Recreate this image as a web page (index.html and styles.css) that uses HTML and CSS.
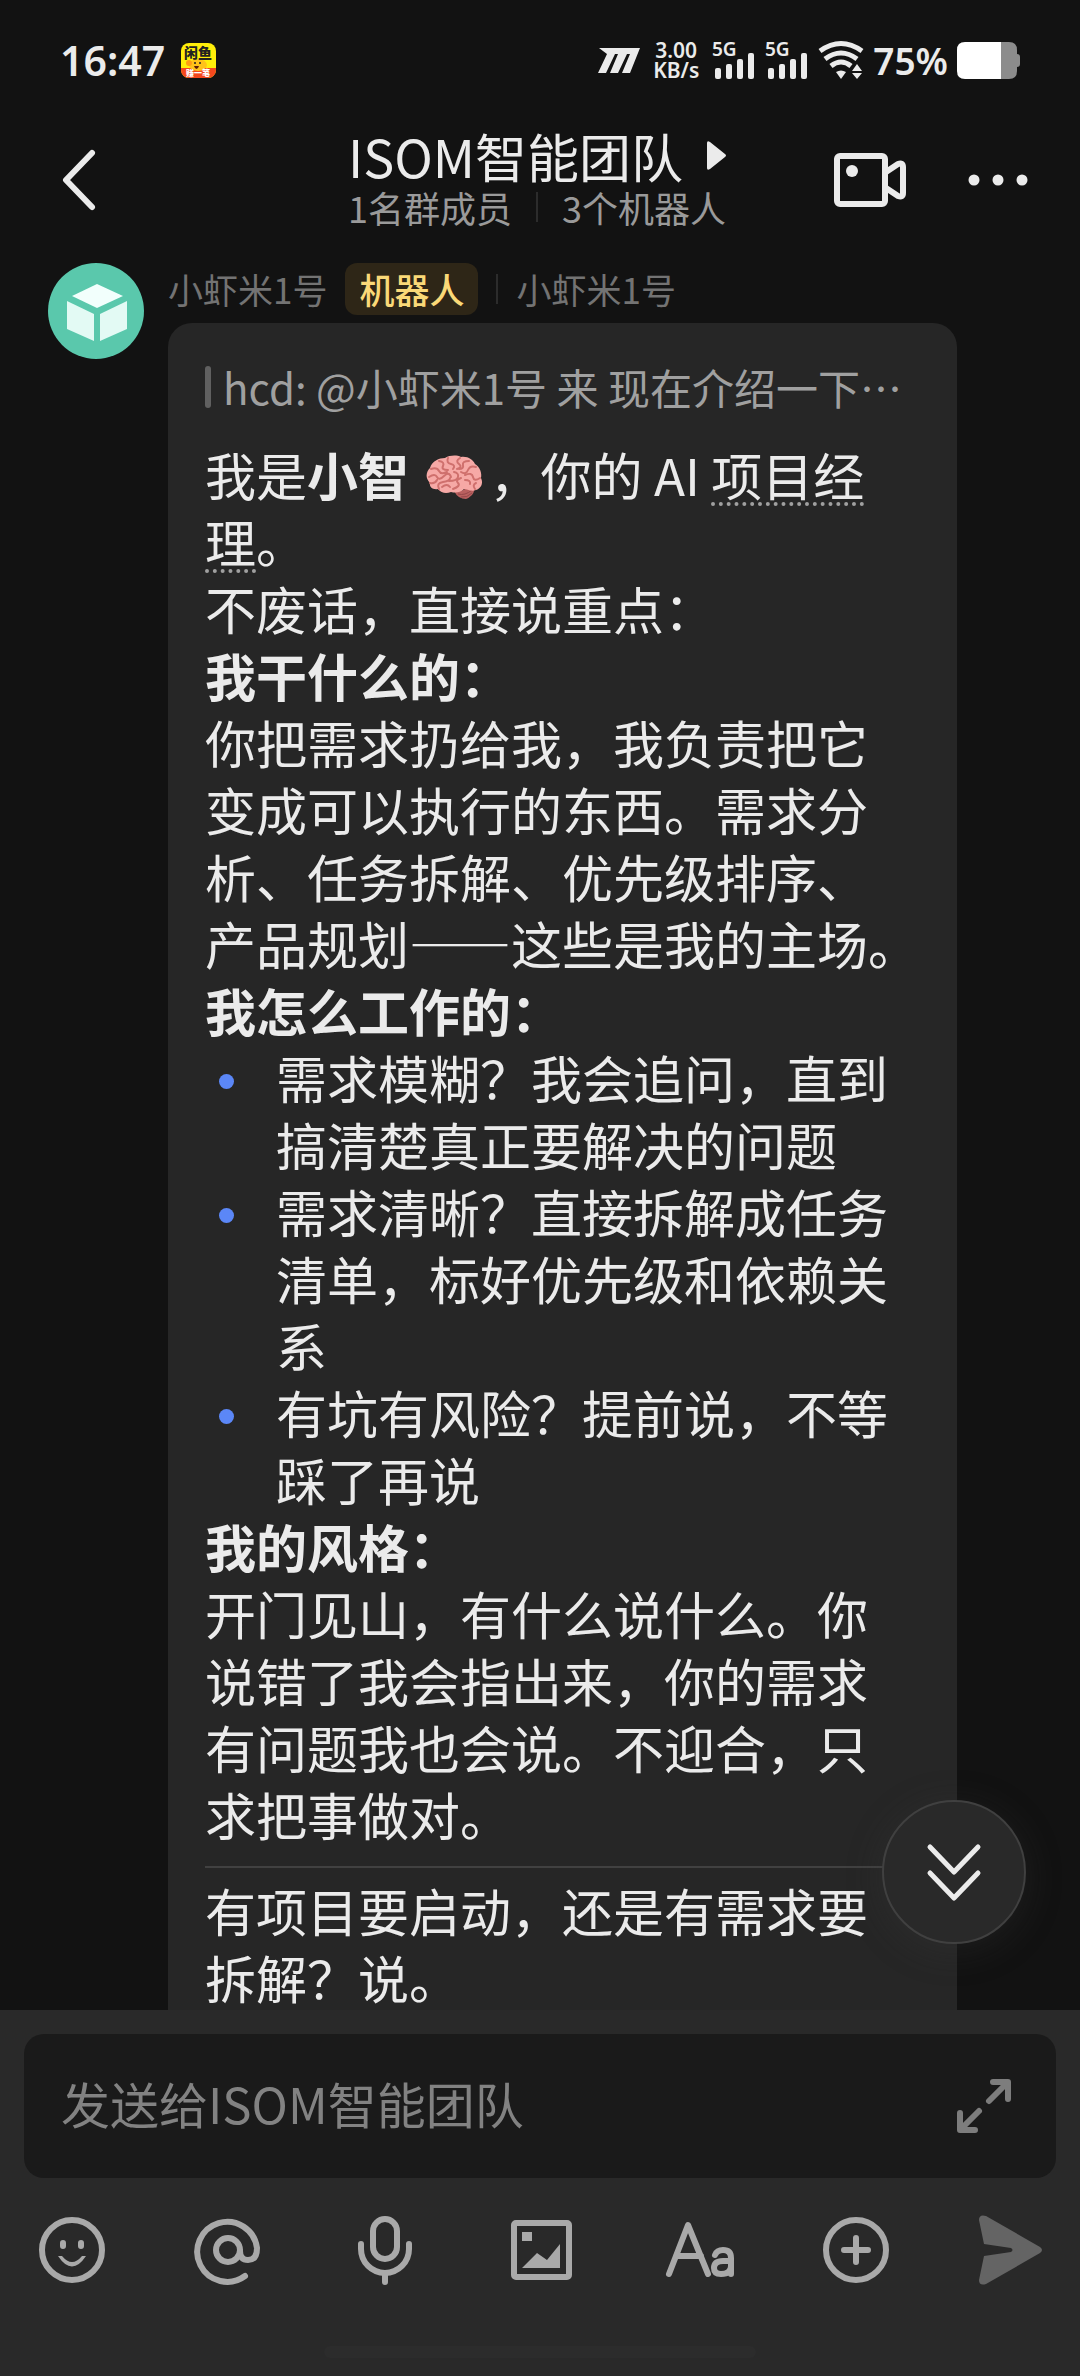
FILE: index.html
```html
<!DOCTYPE html>
<html lang="zh-CN">
<head>
    <meta charset="UTF-8">
    <meta name="viewport" content="width=device-width, initial-scale=1.0">
    <title>ISOM智能团队</title>
    <link rel="stylesheet" href="styles.css">
</head>
<body>
    <div class="screen">

        <!-- 状态栏 -->
        <div class="status-bar">
            <div class="status-left">
                <span class="time">16:47</span>
                <svg class="app-icon" width="35" height="35" viewBox="0 0 35 35">
                    <defs>
                        <clipPath id="appClip"><rect width="35" height="35" rx="8"/></clipPath>
                    </defs>
                    <g clip-path="url(#appClip)">
                        <rect width="35" height="35" fill="#ffee0a"/>
                        <rect y="25" width="35" height="10" fill="#f4481e"/>
                        <ellipse cx="17" cy="22" rx="9" ry="6" fill="#ffc21a"/>
                        <circle cx="8" cy="20" r="3" fill="#ff9d14"/>
                        <circle cx="14" cy="20" r="1" fill="#222"/>
                        <circle cx="19" cy="20" r="1" fill="#222"/>
                        <path d="M13 23h5q-1 3-2.500 3t-2.500-3z" fill="#5a1a08"/>
                        <text class="app-name" x="17" y="15" text-anchor="middle">闲鱼</text>
                        <text class="app-tag" x="17" y="33" text-anchor="middle">赚一笔</text>
                    </g>
                </svg>
            </div>
            <div class="status-right">
                <svg class="logo-m" width="42" height="25" viewBox="0 0 42 25" fill="#ebebeb">
                    <path d="M1 0H42L32 25H24L32 6H29L20 25H12L20 6H17L8 25H0L9 6Z"/>
                </svg>
                <div class="speed">
                    <span>3.00</span>
                    <span>KB/s</span>
                </div>
                <svg class="signal" width="44" height="38" viewBox="0 0 44 38" fill="#ebebeb">
                    <text class="net" x="0" y="15">5G</text>
                    <rect x="3" y="27" width="6" height="11" rx="2"/>
                    <rect x="14" y="23" width="6" height="15" rx="2"/>
                    <rect x="25" y="18" width="6" height="20" rx="2"/>
                    <rect x="36" y="12" width="6" height="26" rx="2"/>
                </svg>
                <svg class="signal" width="44" height="38" viewBox="0 0 44 38" fill="#ebebeb">
                    <text class="net" x="0" y="15">5G</text>
                    <rect x="3" y="27" width="6" height="11" rx="2"/>
                    <rect x="14" y="23" width="6" height="15" rx="2"/>
                    <rect x="25" y="18" width="6" height="20" rx="2"/>
                    <rect x="36" y="12" width="6" height="26" rx="2"/>
                </svg>
                <svg class="wifi" width="46" height="38" viewBox="0 0 46 38" fill="none" stroke="#ebebeb" stroke-width="5">
                    <path d="M2 10Q23-5 44 10"/>
                    <path d="M7 18Q23 6 39 18"/>
                    <path d="M13 25Q23 17 33 25"/>
                    <path d="M18 31q5-3 10 0l-5 7z" fill="#ebebeb" stroke="none"/>
                    <path d="M39 23l5 7H34zM39 38l5-6H34z" fill="#ebebeb" stroke="none"/>
                </svg>
                <span class="percent">75%</span>
                <svg class="battery" width="63" height="37" viewBox="0 0 63 37">
                    <path d="M44 0h8q8 0 8 8v4q3 0 3 3v7q0 3-3 3v4q0 8-8 8h-8z" fill="#8c8c8c"/>
                    <path d="M8 0h36v37H8q-8 0-8-8V8q0-8 8-8z" fill="#fff"/>
                </svg>
            </div>
        </div>

        <!-- 标题栏 -->
        <header class="header">
            <button type="button" class="icon-btn" aria-label="返回">
                <svg width="36" height="66" viewBox="0 0 36 66" fill="none" stroke="#ebebeb" stroke-width="6" stroke-linecap="round" stroke-linejoin="round">
                    <path d="M32 6L6 33l26 27"/>
                </svg>
            </button>
            <div class="header-center">
                <h1 class="title">ISOM智能团队
                    <svg class="arrow" width="19" height="29" viewBox="0 0 19 29" fill="#ebebeb">
                        <path d="M0 2q0-3 3-1l15 12q2 1.500 0 3L3 28q-3 2-3-1z"/>
                    </svg>
                </h1>
                <p class="subtitle"><span>1名群成员</span><i class="split"></i><span>3个机器人</span></p>
            </div>
            <div class="header-actions">
                <button type="button" class="icon-btn" aria-label="视频会议">
                    <svg width="72" height="54" viewBox="0 0 72 54" fill="none" stroke="#ebebeb" stroke-width="6" stroke-linejoin="round">
                        <rect x="3" y="3" width="48" height="48" rx="3"/>
                        <path d="M52 19l12-8q5-2 5 3v26q0 5-5 3l-12-8"/>
                        <circle cx="18" cy="18" r="6" fill="#ebebeb" stroke="none"/>
                    </svg>
                </button>
                <button type="button" class="icon-btn" aria-label="更多">
                    <svg width="60" height="12" viewBox="0 0 60 12" fill="#ebebeb">
                        <circle cx="6" cy="6" r="5.500"/>
                        <circle cx="30" cy="6" r="5.500"/>
                        <circle cx="54" cy="6" r="5.500"/>
                    </svg>
                </button>
            </div>
        </header>

        <!-- 聊天区 -->
        <main class="chat">
            <div class="message-list">
                <article class="message">
                    <svg class="avatar" width="96" height="96" viewBox="0 0 96 96">
                        <circle cx="48" cy="48" r="48" fill="#5ac8ac"/>
                        <g fill="#f2fffc">
                            <path d="M24 33L49 21l26 12-26 12z"/>
                            <path d="M19 38l27 13v27L19 66z" opacity="0.9"/>
                            <path d="M79 38L52 51v27l27-12z" opacity="0.9"/>
                        </g>
                    </svg>
                    <div class="message-body">
                        <div class="sender">
                            <span>小虾米1号</span>
                            <span class="badge">机器人</span>
                            <i class="split"></i>
                            <span>小虾米1号</span>
                        </div>
                        <div class="bubble">
                            <blockquote class="quote">hcd: @小虾米1号 来 现在介绍一下…</blockquote>
                            <p>我是<b>小智</b> <svg class="emoji" width="57" height="46" viewBox="0 0 57 46">
                                    <path d="M28 36q8 1 12-3l8-2q1 6-2 9t-6 4q-8 0-12-8z" fill="#b9605f"/>
                                    <path d="M32 39q7 2 14-4M35 42q6 1 11-4" fill="none" stroke="#96484a" stroke-width="1"/>
                                    <path d="M4 28C-1 23 0 17 4 13 6 6 13 3 19 3 24 0 31 0 35 2 42 1 47 5 49 9 54 12 56 18 55 23 58 29 54 34 50 35 45 37 41 34 38 34 34 38 29 38 25 37 20 39 15 38 12 34 7 35 3 32 4 28z" fill="#f6a9a6"/>
                                    <g fill="none" stroke="#cf706d" stroke-width="2" stroke-linecap="round">
                                        <path d="M13 6q6 1 4 5t5 4M22 3q-2 5 3 6t2 5M34 3q-5 3-1 6t-2 5M43 6q-7 0-6 4t-4 4M50 12q-6-2-8 3t-7 2"/>
                                        <path d="M5 14q6-2 8 2t8 1M3 22q6-4 8 0t7-1 7 1M4 28q5 1 7-3M13 34q-3-6 4-7t7-4M28 17q5 1 4 5t-9 4M39 20q7-3 8 2t7 1M35 23q-6 2-3 5t-5 6M39 25q6 0 5 4M50 28q-4 2-1 6M16 32q5-4 8 0"/>
                                    </g>
                                </svg>，你的 AI <span class="term">项目经理</span>。</p>
                            <p>不废话，直接说重点：</p>
                            <p><b>我干什么的：</b></p>
                            <p>你把需求扔给我，我负责把它变成可以执行的东西。需求分析、任务拆解、优先级排序、产品规划——这些是我的主场<span class="hang">。</span></p>
                            <p><b>我怎么工作的：</b></p>
                            <ul class="points">
                                <li>需求模糊？我会追问，直到搞清楚真正要解决的问题</li>
                                <li>需求清晰？直接拆解成任务清单，标好优先级和依赖关系</li>
                                <li>有坑有风险？提前说，不等踩了再说</li>
                            </ul>
                            <p><b>我的风格：</b></p>
                            <p>开门见山，有什么说什么。你说错了我会指出来，你的需求有问题我也会说。不迎合，只求把事做对。</p>
                            <hr class="line">
                            <p>有项目要启动，还是有需求要拆解？说。</p>
                        </div>
                    </div>
                </article>
            </div>
            <button type="button" class="scroll-btn" aria-label="回到底部">
                <svg width="54" height="60" viewBox="0 0 54 60" fill="none" stroke="#ebebeb" stroke-width="5" stroke-linecap="round" stroke-linejoin="round">
                    <path d="M3 5l24 25L51 5M3 31l24 25 24-25"/>
                </svg>
            </button>
        </main>

        <!-- 输入区 -->
        <footer class="composer">
            <div class="input-box">
                <input type="text" class="input" placeholder="发送给ISOM智能团队" aria-label="消息">
                <button type="button" class="icon-btn" aria-label="展开">
                    <svg width="54" height="54" viewBox="0 0 54 54" fill="none" stroke="#7d7d7d" stroke-width="6" stroke-linecap="round" stroke-linejoin="round">
                        <path d="M36 3h15v17M32 22L50 4M18 51H3V34M22 32L4 50"/>
                    </svg>
                </button>
            </div>
            <div class="toolbar">
                <button type="button" class="icon-btn" aria-label="表情">
                    <svg width="66" height="68" viewBox="0 0 66 68" fill="none" stroke="#a9a9a9" stroke-width="6" stroke-linecap="round">
                        <circle cx="33" cy="34" r="30"/>
                        <path d="M24 27v3M42 27v3"/>
                        <path d="M19 40h4q10 12 20 0h4q-14 21-28 0z" fill="#a9a9a9" stroke="none"/>
                    </svg>
                </button>
                <button type="button" class="icon-btn" aria-label="提及">
                    <svg width="66" height="68" viewBox="0 0 66 68" fill="none" stroke="#a9a9a9" stroke-width="6" stroke-linecap="round">
                        <circle cx="33" cy="34" r="12"/>
                        <path d="M45 35q0 9 8 9 9 0 9-12A30 30 0 1 0 50 60"/>
                    </svg>
                </button>
                <button type="button" class="icon-btn" aria-label="语音">
                    <svg width="66" height="68" viewBox="0 0 66 68" fill="none" stroke="#a9a9a9" stroke-width="6" stroke-linecap="round">
                        <rect x="21" y="3" width="24" height="40" rx="12"/>
                        <path d="M9 28v5a24 24 0 0 0 48 0v-5M33 58v8"/>
                    </svg>
                </button>
                <button type="button" class="icon-btn" aria-label="图片">
                    <svg width="66" height="68" viewBox="0 0 66 68" fill="none" stroke="#a9a9a9" stroke-width="6" stroke-linejoin="round">
                        <rect x="6" y="7" width="55" height="54" rx="2"/>
                        <path d="M14 16h10v9H14zM14 52l15-15 10 7 13-16v24z" fill="#a9a9a9" stroke="none"/>
                    </svg>
                </button>
                <button type="button" class="icon-btn" aria-label="文字格式">
                    <svg width="68" height="68" viewBox="0 0 68 68" fill="none" stroke="#a9a9a9" stroke-width="6" stroke-linecap="round" stroke-linejoin="round">
                        <path d="M5 58L24 9l20 49M12 40h25"/>
                        <path d="M51 39q2-5 8-5 8 0 8 8v16M67 45h-8q-9 0-9 7 0 6 7 6 10 0 10-8"/>
                    </svg>
                </button>
                <button type="button" class="icon-btn" aria-label="添加">
                    <svg width="66" height="68" viewBox="0 0 66 68" fill="none" stroke="#a9a9a9" stroke-width="6" stroke-linecap="round">
                        <circle cx="33" cy="34" r="30"/>
                        <path d="M33 22v24M21 34h24"/>
                    </svg>
                </button>
                <button type="button" class="icon-btn" aria-label="发送">
                    <svg width="74" height="70" viewBox="0 0 74 70" fill="#646464">
                        <path d="M0 5q0-6 7-4l54 31q4 3 0 6L7 69q-7 2-7-4l5-24 27-4q3-2 0-4L5 29z"/>
                    </svg>
                </button>
            </div>
            <div class="home-bar"></div>
        </footer>
    </div>
</body>
</html>
```

FILE: styles.css
```css
* {
    box-sizing: border-box;
}

body {
    margin: 0;
    background-color: #121212;
    color: #ebebeb;
    font-family: "Noto Sans CJK SC", sans-serif;
}

p, h1, ul, blockquote {
    margin: 0;
    padding: 0;
}

svg {
    display: block;
    flex-shrink: 0;
    overflow: visible;
}

.screen {
    display: flex;
    flex-direction: column;
    height: 100vh;
}

.icon-btn {
    display: flex;
    padding: 0;
    border: none;
    background: none;
    cursor: pointer;
}

/* 状态栏 */
.status-bar {
    display: flex;
    justify-content: space-between;
    align-items: center;
    height: 120px;
    padding: 0 60px;
    font-family: "Noto Sans", sans-serif;
    font-weight: 600;
}

.status-left,
.status-right {
    display: flex;
    align-items: center;
}

.status-left {
    gap: 16px;
}

.time {
    font-size: 41px;
}

.app-name {
    font: 900 14px "Noto Sans CJK SC", sans-serif;
    fill: #222;
}

.app-tag {
    font: 900 8px "Noto Sans CJK SC", sans-serif;
    fill: #fff;
}

.status-right {
    gap: 9px;
}

.speed {
    display: flex;
    flex-direction: column;
    align-items: center;
    margin: 0 4px;
    font-size: 21px;
    line-height: 20px;
}

.net {
    font-size: 19px;
}

.percent {
    font-size: 37px;
}

/* 标题栏 */
.header {
    display: flex;
    justify-content: space-between;
    align-items: center;
    height: 119px;
    padding: 0 52px 0 60px;
}

.header-center {
    flex: 1;
    display: flex;
    flex-direction: column;
    align-items: center;
    padding: 0 0 4px 144px;
}

.title {
    display: flex;
    align-items: center;
    gap: 24px;
    font-size: 52px;
    font-weight: 400;
    line-height: 58px;
}

.subtitle {
    display: flex;
    align-items: center;
    gap: 24px;
    font-size: 36px;
    line-height: 44px;
    color: #9a9a9a;
}

.split {
    width: 2px;
    height: 30px;
    background-color: #2c2c2c;
}

.header-actions {
    display: flex;
    align-items: center;
    gap: 62px;
}

/* 聊天区 */
.chat {
    position: relative;
    flex: 1;
    min-height: 0;
}

.message-list {
    height: 100%;
    padding: 24px 123px 0 48px;
    overflow-y: auto;
    scrollbar-width: none;
}

.message {
    display: flex;
    gap: 24px;
}

.message-body {
    flex: 1;
    min-width: 0;
}

.sender {
    display: flex;
    align-items: center;
    gap: 18px;
    height: 52px;
    margin-bottom: 8px;
    font-size: 35px;
    line-height: 52px;
    color: #737373;
}

.badge {
    padding: 0 14px;
    border-radius: 12px;
    background-color: #2e2617;
    color: #fad978;
    font-weight: 500;
}

.bubble {
    padding: 34px 48px 60px 37px;
    border-radius: 24px;
    background-color: #262626;
    font-size: 51px;
    line-height: 67px;
}

.quote {
    display: flex;
    align-items: center;
    gap: 12px;
    margin-bottom: 24px;
    font-size: 42px;
    line-height: 60px;
    color: #a0a0a0;
    white-space: nowrap;
}

.quote::before {
    content: "";
    width: 6px;
    height: 42px;
    border-radius: 3px;
    background-color: #606060;
}

.emoji {
    display: inline-block;
    margin: 0 6px;
    vertical-align: -5px;
}

.term {
    text-decoration: underline dotted #a0a0a0 4px;
    text-underline-offset: 6px;
}

/* 行尾句号只占半个字宽 */
.hang {
    display: inline-block;
    width: 26px;
    white-space: nowrap;
}

.points {
    list-style: none;
}

.points li {
    position: relative;
    padding-left: 71px;
}

.points li::before {
    content: "";
    position: absolute;
    left: 14px;
    top: 30px;
    width: 15px;
    height: 15px;
    border-radius: 50%;
    background-color: #5b87f7;
}

.line {
    height: 2px;
    margin: 18px 0 9px;
    border: none;
    background-color: #414141;
}

.scroll-btn {
    position: absolute;
    right: 54px;
    bottom: 66px;
    display: flex;
    align-items: center;
    justify-content: center;
    width: 144px;
    height: 144px;
    border: 2px solid #404040;
    border-radius: 50%;
    background-color: #292929;
    box-shadow: 0 6px 36px rgba(60, 60, 60, 0.3);
    cursor: pointer;
}

/* 输入区 */
.composer {
    padding: 24px 24px 18px;
    background-color: #292929;
}

.input-box {
    display: flex;
    align-items: center;
    gap: 24px;
    height: 144px;
    padding: 0 45px 0 37px;
    border-radius: 20px;
    background-color: #1a1a1a;
}

.input {
    flex: 1;
    min-width: 0;
    padding: 0 0 8px;
    border: none;
    outline: none;
    background: none;
    color: #ebebeb;
    font-family: inherit;
    font-size: 49px;
}

.input::placeholder {
    color: #828282;
}

.toolbar {
    display: flex;
    justify-content: space-between;
    align-items: center;
    height: 144px;
    padding: 0 3px 0 15px;
}

.home-bar {
    width: 432px;
    height: 12px;
    margin: 24px auto 0;
    border-radius: 6px;
    background-color: #2c2c2c;
}
```
